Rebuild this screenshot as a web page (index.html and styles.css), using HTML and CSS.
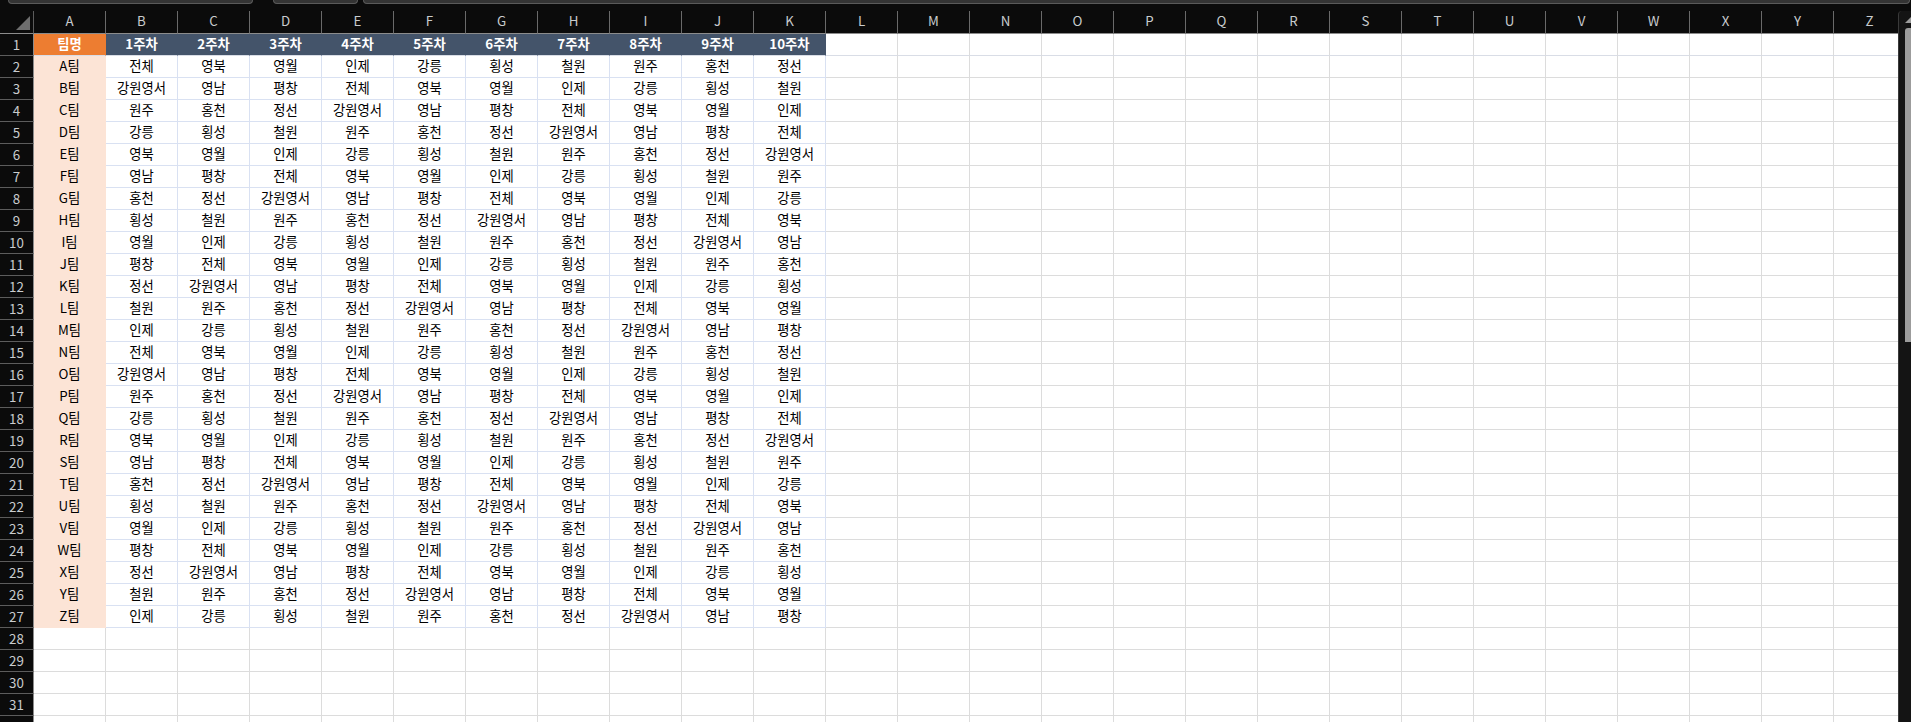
FILE: index.html
```html
<!DOCTYPE html>
<html lang="ko">
<head>
<meta charset="utf-8">
<title>팀별 주차 일정</title>
<link rel="stylesheet" href="styles.css">
</head>
<body>
<div class="app">
<div class="toolbar"><div class="field name-box"></div><div class="field fx-box"></div><div class="field formula-box"></div></div>
<div class="workspace">
<div class="grid-clip">
<table class="sheet">
<thead>
<tr><th class="corner"><svg class="corner-mark" width="14" height="14" viewBox="0 0 14 14"><polygon points="14,0 14,14 0,14"/></svg></th><th>A</th><th>B</th><th>C</th><th>D</th><th>E</th><th>F</th><th>G</th><th>H</th><th>I</th><th>J</th><th>K</th><th>L</th><th>M</th><th>N</th><th>O</th><th>P</th><th>Q</th><th>R</th><th>S</th><th>T</th><th>U</th><th>V</th><th>W</th><th>X</th><th>Y</th><th>Z</th></tr>
</thead>
<tbody>
<tr class="head"><th>1</th><td class="team-head">팀명</td><td class="week">1주차</td><td class="week">2주차</td><td class="week">3주차</td><td class="week">4주차</td><td class="week">5주차</td><td class="week">6주차</td><td class="week">7주차</td><td class="week">8주차</td><td class="week">9주차</td><td class="week">10주차</td><td></td><td></td><td></td><td></td><td></td><td></td><td></td><td></td><td></td><td></td><td></td><td></td><td></td><td></td><td></td></tr>
<tr class="data"><th>2</th><td class="team">A팀</td><td>전체</td><td>영북</td><td>영월</td><td>인제</td><td>강릉</td><td>횡성</td><td>철원</td><td>원주</td><td>홍천</td><td>정선</td><td></td><td></td><td></td><td></td><td></td><td></td><td></td><td></td><td></td><td></td><td></td><td></td><td></td><td></td><td></td></tr>
<tr class="data"><th>3</th><td class="team">B팀</td><td>강원영서</td><td>영남</td><td>평창</td><td>전체</td><td>영북</td><td>영월</td><td>인제</td><td>강릉</td><td>횡성</td><td>철원</td><td></td><td></td><td></td><td></td><td></td><td></td><td></td><td></td><td></td><td></td><td></td><td></td><td></td><td></td><td></td></tr>
<tr class="data"><th>4</th><td class="team">C팀</td><td>원주</td><td>홍천</td><td>정선</td><td>강원영서</td><td>영남</td><td>평창</td><td>전체</td><td>영북</td><td>영월</td><td>인제</td><td></td><td></td><td></td><td></td><td></td><td></td><td></td><td></td><td></td><td></td><td></td><td></td><td></td><td></td><td></td></tr>
<tr class="data"><th>5</th><td class="team">D팀</td><td>강릉</td><td>횡성</td><td>철원</td><td>원주</td><td>홍천</td><td>정선</td><td>강원영서</td><td>영남</td><td>평창</td><td>전체</td><td></td><td></td><td></td><td></td><td></td><td></td><td></td><td></td><td></td><td></td><td></td><td></td><td></td><td></td><td></td></tr>
<tr class="data"><th>6</th><td class="team">E팀</td><td>영북</td><td>영월</td><td>인제</td><td>강릉</td><td>횡성</td><td>철원</td><td>원주</td><td>홍천</td><td>정선</td><td>강원영서</td><td></td><td></td><td></td><td></td><td></td><td></td><td></td><td></td><td></td><td></td><td></td><td></td><td></td><td></td><td></td></tr>
<tr class="data"><th>7</th><td class="team">F팀</td><td>영남</td><td>평창</td><td>전체</td><td>영북</td><td>영월</td><td>인제</td><td>강릉</td><td>횡성</td><td>철원</td><td>원주</td><td></td><td></td><td></td><td></td><td></td><td></td><td></td><td></td><td></td><td></td><td></td><td></td><td></td><td></td><td></td></tr>
<tr class="data"><th>8</th><td class="team">G팀</td><td>홍천</td><td>정선</td><td>강원영서</td><td>영남</td><td>평창</td><td>전체</td><td>영북</td><td>영월</td><td>인제</td><td>강릉</td><td></td><td></td><td></td><td></td><td></td><td></td><td></td><td></td><td></td><td></td><td></td><td></td><td></td><td></td><td></td></tr>
<tr class="data"><th>9</th><td class="team">H팀</td><td>횡성</td><td>철원</td><td>원주</td><td>홍천</td><td>정선</td><td>강원영서</td><td>영남</td><td>평창</td><td>전체</td><td>영북</td><td></td><td></td><td></td><td></td><td></td><td></td><td></td><td></td><td></td><td></td><td></td><td></td><td></td><td></td><td></td></tr>
<tr class="data"><th>10</th><td class="team">I팀</td><td>영월</td><td>인제</td><td>강릉</td><td>횡성</td><td>철원</td><td>원주</td><td>홍천</td><td>정선</td><td>강원영서</td><td>영남</td><td></td><td></td><td></td><td></td><td></td><td></td><td></td><td></td><td></td><td></td><td></td><td></td><td></td><td></td><td></td></tr>
<tr class="data"><th>11</th><td class="team">J팀</td><td>평창</td><td>전체</td><td>영북</td><td>영월</td><td>인제</td><td>강릉</td><td>횡성</td><td>철원</td><td>원주</td><td>홍천</td><td></td><td></td><td></td><td></td><td></td><td></td><td></td><td></td><td></td><td></td><td></td><td></td><td></td><td></td><td></td></tr>
<tr class="data"><th>12</th><td class="team">K팀</td><td>정선</td><td>강원영서</td><td>영남</td><td>평창</td><td>전체</td><td>영북</td><td>영월</td><td>인제</td><td>강릉</td><td>횡성</td><td></td><td></td><td></td><td></td><td></td><td></td><td></td><td></td><td></td><td></td><td></td><td></td><td></td><td></td><td></td></tr>
<tr class="data"><th>13</th><td class="team">L팀</td><td>철원</td><td>원주</td><td>홍천</td><td>정선</td><td>강원영서</td><td>영남</td><td>평창</td><td>전체</td><td>영북</td><td>영월</td><td></td><td></td><td></td><td></td><td></td><td></td><td></td><td></td><td></td><td></td><td></td><td></td><td></td><td></td><td></td></tr>
<tr class="data"><th>14</th><td class="team">M팀</td><td>인제</td><td>강릉</td><td>횡성</td><td>철원</td><td>원주</td><td>홍천</td><td>정선</td><td>강원영서</td><td>영남</td><td>평창</td><td></td><td></td><td></td><td></td><td></td><td></td><td></td><td></td><td></td><td></td><td></td><td></td><td></td><td></td><td></td></tr>
<tr class="data"><th>15</th><td class="team">N팀</td><td>전체</td><td>영북</td><td>영월</td><td>인제</td><td>강릉</td><td>횡성</td><td>철원</td><td>원주</td><td>홍천</td><td>정선</td><td></td><td></td><td></td><td></td><td></td><td></td><td></td><td></td><td></td><td></td><td></td><td></td><td></td><td></td><td></td></tr>
<tr class="data"><th>16</th><td class="team">O팀</td><td>강원영서</td><td>영남</td><td>평창</td><td>전체</td><td>영북</td><td>영월</td><td>인제</td><td>강릉</td><td>횡성</td><td>철원</td><td></td><td></td><td></td><td></td><td></td><td></td><td></td><td></td><td></td><td></td><td></td><td></td><td></td><td></td><td></td></tr>
<tr class="data"><th>17</th><td class="team">P팀</td><td>원주</td><td>홍천</td><td>정선</td><td>강원영서</td><td>영남</td><td>평창</td><td>전체</td><td>영북</td><td>영월</td><td>인제</td><td></td><td></td><td></td><td></td><td></td><td></td><td></td><td></td><td></td><td></td><td></td><td></td><td></td><td></td><td></td></tr>
<tr class="data"><th>18</th><td class="team">Q팀</td><td>강릉</td><td>횡성</td><td>철원</td><td>원주</td><td>홍천</td><td>정선</td><td>강원영서</td><td>영남</td><td>평창</td><td>전체</td><td></td><td></td><td></td><td></td><td></td><td></td><td></td><td></td><td></td><td></td><td></td><td></td><td></td><td></td><td></td></tr>
<tr class="data"><th>19</th><td class="team">R팀</td><td>영북</td><td>영월</td><td>인제</td><td>강릉</td><td>횡성</td><td>철원</td><td>원주</td><td>홍천</td><td>정선</td><td>강원영서</td><td></td><td></td><td></td><td></td><td></td><td></td><td></td><td></td><td></td><td></td><td></td><td></td><td></td><td></td><td></td></tr>
<tr class="data"><th>20</th><td class="team">S팀</td><td>영남</td><td>평창</td><td>전체</td><td>영북</td><td>영월</td><td>인제</td><td>강릉</td><td>횡성</td><td>철원</td><td>원주</td><td></td><td></td><td></td><td></td><td></td><td></td><td></td><td></td><td></td><td></td><td></td><td></td><td></td><td></td><td></td></tr>
<tr class="data"><th>21</th><td class="team">T팀</td><td>홍천</td><td>정선</td><td>강원영서</td><td>영남</td><td>평창</td><td>전체</td><td>영북</td><td>영월</td><td>인제</td><td>강릉</td><td></td><td></td><td></td><td></td><td></td><td></td><td></td><td></td><td></td><td></td><td></td><td></td><td></td><td></td><td></td></tr>
<tr class="data"><th>22</th><td class="team">U팀</td><td>횡성</td><td>철원</td><td>원주</td><td>홍천</td><td>정선</td><td>강원영서</td><td>영남</td><td>평창</td><td>전체</td><td>영북</td><td></td><td></td><td></td><td></td><td></td><td></td><td></td><td></td><td></td><td></td><td></td><td></td><td></td><td></td><td></td></tr>
<tr class="data"><th>23</th><td class="team">V팀</td><td>영월</td><td>인제</td><td>강릉</td><td>횡성</td><td>철원</td><td>원주</td><td>홍천</td><td>정선</td><td>강원영서</td><td>영남</td><td></td><td></td><td></td><td></td><td></td><td></td><td></td><td></td><td></td><td></td><td></td><td></td><td></td><td></td><td></td></tr>
<tr class="data"><th>24</th><td class="team">W팀</td><td>평창</td><td>전체</td><td>영북</td><td>영월</td><td>인제</td><td>강릉</td><td>횡성</td><td>철원</td><td>원주</td><td>홍천</td><td></td><td></td><td></td><td></td><td></td><td></td><td></td><td></td><td></td><td></td><td></td><td></td><td></td><td></td><td></td></tr>
<tr class="data"><th>25</th><td class="team">X팀</td><td>정선</td><td>강원영서</td><td>영남</td><td>평창</td><td>전체</td><td>영북</td><td>영월</td><td>인제</td><td>강릉</td><td>횡성</td><td></td><td></td><td></td><td></td><td></td><td></td><td></td><td></td><td></td><td></td><td></td><td></td><td></td><td></td><td></td></tr>
<tr class="data"><th>26</th><td class="team">Y팀</td><td>철원</td><td>원주</td><td>홍천</td><td>정선</td><td>강원영서</td><td>영남</td><td>평창</td><td>전체</td><td>영북</td><td>영월</td><td></td><td></td><td></td><td></td><td></td><td></td><td></td><td></td><td></td><td></td><td></td><td></td><td></td><td></td><td></td></tr>
<tr class="data"><th>27</th><td class="team">Z팀</td><td>인제</td><td>강릉</td><td>횡성</td><td>철원</td><td>원주</td><td>홍천</td><td>정선</td><td>강원영서</td><td>영남</td><td>평창</td><td></td><td></td><td></td><td></td><td></td><td></td><td></td><td></td><td></td><td></td><td></td><td></td><td></td><td></td><td></td></tr>
<tr><th>28</th><td></td><td></td><td></td><td></td><td></td><td></td><td></td><td></td><td></td><td></td><td></td><td></td><td></td><td></td><td></td><td></td><td></td><td></td><td></td><td></td><td></td><td></td><td></td><td></td><td></td><td></td></tr>
<tr><th>29</th><td></td><td></td><td></td><td></td><td></td><td></td><td></td><td></td><td></td><td></td><td></td><td></td><td></td><td></td><td></td><td></td><td></td><td></td><td></td><td></td><td></td><td></td><td></td><td></td><td></td><td></td></tr>
<tr><th>30</th><td></td><td></td><td></td><td></td><td></td><td></td><td></td><td></td><td></td><td></td><td></td><td></td><td></td><td></td><td></td><td></td><td></td><td></td><td></td><td></td><td></td><td></td><td></td><td></td><td></td><td></td></tr>
<tr><th>31</th><td></td><td></td><td></td><td></td><td></td><td></td><td></td><td></td><td></td><td></td><td></td><td></td><td></td><td></td><td></td><td></td><td></td><td></td><td></td><td></td><td></td><td></td><td></td><td></td><td></td><td></td></tr>
<tr><th></th><td></td><td></td><td></td><td></td><td></td><td></td><td></td><td></td><td></td><td></td><td></td><td></td><td></td><td></td><td></td><td></td><td></td><td></td><td></td><td></td><td></td><td></td><td></td><td></td><td></td><td></td></tr>
</tbody>
</table>
</div>
<div class="scrollbar">
<svg class="scroll-arrow" width="6" height="6" viewBox="0 0 6 6"><polygon points="0,6 6,0 6,6"/></svg>
<div class="scroll-thumb"></div>
</div>
</div>
</div>
</body>
</html>
```
FILE: styles.css
```css
* { box-sizing: border-box; }
html, body { margin: 0; height: 100%; background: #0b0b0b; overflow: hidden; }
body { font-family: "Noto Sans CJK KR", "Noto Sans", sans-serif; }

.app { display: flex; flex-direction: column; width: 1911px; height: 722px; }

.toolbar { display: flex; flex: 0 0 11px; padding-left: 8px; padding-right: 1px; background: #0b0b0b; }
.field { height: 4px; background: #343434; border: 1px solid #5a5a5a; border-top: 0; border-radius: 0 0 6px 6px; }
.name-box { width: 245px; margin-right: 20px; }
.fx-box { width: 85px; margin-right: 5px; }
.formula-box { flex: 1; }

.workspace { display: flex; flex: 1; min-height: 0; }
.grid-clip { flex: 0 0 1898px; overflow: hidden; background: #fff; }

.sheet { border-collapse: separate; border-spacing: 0; table-layout: fixed; width: 1906px; font-size: 13.33px; color: #000; }
.sheet tr { height: 22px; }
.sheet th, .sheet td { width: 72px; height: 22px; padding: 0 0 2px; text-align: center; white-space: nowrap; overflow: hidden; font-weight: 400; line-height: 19px; }

.sheet td { border-right: 1px solid #dcdcdc; border-bottom: 1px solid #dcdcdc; }

.sheet thead th { background: #0b0b0b; color: #c9ccce; padding-bottom: 3px; border-right: 1px solid #6a6a6a; border-bottom: 1px solid #8c8c8c; font-size: 13.33px; }
.sheet thead th.corner { width: 34px; padding: 0; vertical-align: top; border-right-color: #5c5c5c; }
.corner-mark { display: block; margin: 5px 0 0 16px; }
.corner-mark polygon { fill: #6e6e6e; }

.sheet tbody th { width: 34px; padding-bottom: 0; background: #0b0b0b; color: #c9ccce; border-right: 1px solid #8c8c8c; border-bottom: 1px solid #5c5c5c; font-size: 13.33px; }

.data td:nth-child(-n+12) { border-color: #d9e1f2; }
.head td { border-bottom-color: #d9dde6; }
.sheet .team-head { background: #ed7d31; color: #fff; font-weight: 700; border-color: #ed7d31; border-bottom-color: #d9dde6; }
.sheet .week { background: #44546a; color: #fff; font-weight: 700; border-color: #44546a; border-bottom-color: #d9dde6; }
.sheet .data .team { background: #fce4d6; border-color: #fce4d6; }

.scrollbar { display: flex; flex-direction: column; align-items: flex-end; flex: 0 0 13px; background: #141414; border-left: 1px solid #3a3a3a; border-top-left-radius: 4px; padding-top: 6px; }
.scroll-arrow { flex: none; }
.scroll-arrow polygon { fill: #9c9c9c; }
.scroll-thumb { width: 6px; height: 314px; margin-top: 5px; background: #9c9c9c; border-radius: 3px 0 0 0; }
```
